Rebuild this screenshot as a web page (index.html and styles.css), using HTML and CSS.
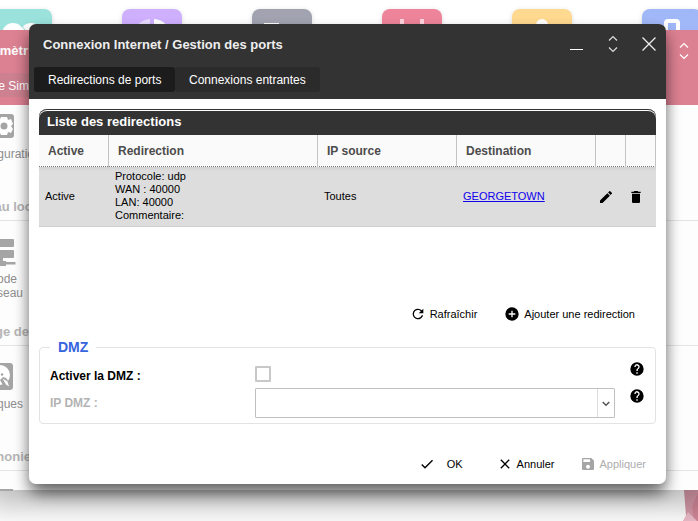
FILE: index.html
```html
<!DOCTYPE html>
<html lang="fr">
<head>
<meta charset="utf-8">
<title>Gestion des ports</title>
<link rel="stylesheet" href="styles.css">
</head>
<body>
<div class="desktop">
  <div class="apps">
    <div class="app teal"><svg width="60" height="60" viewBox="0 0 60 60"><circle cx="21" cy="25" r="11" fill="#fff"/><circle cx="39" cy="25" r="11" fill="#fff"/><path d="M30 17l5 7" stroke="#9be1dc"/></svg></div>
    <div class="app violet"><svg width="60" height="60" viewBox="0 0 60 60"><path d="M28 10a18 18 0 0 0-17 17h17z" fill="#e8dcff"/><path d="M32 10a18 18 0 0 1 17 17H32z" fill="#fff"/><circle cx="30" cy="28" r="13.500" fill="#cfb0ff"/></svg></div>
    <div class="app gray"><svg width="60" height="60" viewBox="0 0 60 60"><path d="M12 14h15v30H12z" fill="#fff"/></svg></div>
    <div class="app rose"><svg width="60" height="60" viewBox="0 0 60 60"><path d="M18 10h4v20h-4zM38 10h4v20h-4z" fill="#ffd3dd"/></svg></div>
    <div class="app amber"><svg width="60" height="60" viewBox="0 0 60 60"><circle cx="30" cy="16" r="6" fill="#fff"/></svg></div>
    <div class="app blue"><svg width="60" height="60" viewBox="0 0 60 60"><rect x="24" y="12" width="12" height="20" rx="2" fill="none" stroke="#fff" stroke-width="4"/></svg></div>
  </div>
  <svg class="wall" width="16" height="31" viewBox="0 0 16 31"><path d="M1 0h15v31H0l3-5z" fill="#d79aa9"/><path d="M16 0v31h-5l-2-14z" fill="#d18798"/><path d="M0 31l5-9 9 9z" fill="#edbcca"/></svg>

  <section class="window settings">
    <header class="settings-head">
      <b class="settings-title">amètr</b>
      <svg class="settings-max" width="10" height="18" viewBox="0 0 10 18" fill="none" stroke="#fff" stroke-width="1.200"><path d="M1 5.500l4-4 4 4M1 12.500l4 4 4-4"/></svg>
      <span class="settings-tab">e Sim</span>
    </header>
    <div class="group first">
      <svg width="26" height="24" viewBox="0 0 26 24"><rect width="26" height="24" rx="3" fill="#a5a5a5"/><path d="M13 3h6l1 3 3-1 2 5-2 2 2 3-2 4-3-1-1 3h-6l-2-4-3-5 3-5z" fill="#fff"/><circle cx="16" cy="12" r="3.500" fill="#a5a5a5"/></svg>
      <span class="item cut">guratio</span>
    </div>
    <h3 class="cut1">au loc</h3>
    <div class="group net">
      <svg width="30" height="28" viewBox="0 0 30 28" fill="#a5a5a5"><rect width="28" height="8" rx="1"/><rect y="11" width="28" height="8" rx="1"/><path d="M14 19h3v3h3v1h9.500v2.500H20V27h-8v-5h2z"/></svg>
      <span class="item">ode</span>
      <span class="item two">seau</span>
    </div>
    <h3>ge de</h3>
    <div class="group disk">
      <svg width="26" height="27" viewBox="0 0 26 27"><rect width="26" height="27" rx="3" fill="#a5a5a5"/><circle cx="13" cy="12" r="10" fill="#fff"/><circle cx="15" cy="11.500" r="1.200" fill="#a5a5a5"/><path d="M13 17l3-3 3 1 6 8-2 3-6-2z" fill="#a5a5a5"/><path d="M15.500 15.500l5 3 1.500 5-3-2z" fill="#fff"/></svg>
      <span class="item">ques</span>
    </div>
    <h3 class="cut2">honie</h3>
    <div class="sliver"></div>
  </section>

  <section class="window dialog">
    <header class="head">
      <div class="titlebar">
        <b>Connexion Internet / Gestion des ports</b>
        <div class="controls">
          <svg width="13" height="16" viewBox="0 0 13 16"><path d="M0 12.500h13" stroke="#fff"/></svg>
          <svg width="10" height="18" viewBox="0 0 10 18" fill="none" stroke="#ddd" stroke-width="1.200"><path d="M1 5.500l4-4 4 4M1 12.500l4 4 4-4"/></svg>
          <svg width="14" height="14" viewBox="0 0 14 14"><path d="M.5.5l13 13M13.500.5l-13 13" stroke="#eee" stroke-width="1.300"/></svg>
        </div>
      </div>
      <nav class="tabs"><span class="tab active">Redirections de ports</span><span class="tab">Connexions entrantes</span></nav>
    </header>

    <div class="panel">
      <div class="panel-title">Liste des redirections</div>
      <div class="row columns"><b>Active</b><b>Redirection</b><b>IP source</b><b>Destination</b><b></b><b></b></div>
      <div class="row entry">
        <span>Active</span>
        <span class="rule">Protocole: udp<br>WAN : 40000<br>LAN: 40000<br>Commentaire:</span>
        <span>Toutes</span>
        <span><a href="#">GEORGETOWN</a></span>
        <span class="act"><svg width="16" height="16" viewBox="0 0 24 24"><path d="M3 17.250V21h3.750L17.810 9.940l-3.750-3.750L3 17.250zM20.710 7.040a1 1 0 0 0 0-1.410l-2.340-2.340a1 1 0 0 0-1.410 0l-1.830 1.830 3.750 3.750 1.830-1.830z"/></svg></span>
        <span class="act"><svg width="16" height="16" viewBox="0 0 24 24"><path d="M6 19c0 1.100.9 2 2 2h8c1.100 0 2-.9 2-2V7H6v12zM19 4h-3.500l-1-1h-5l-1 1H5v2h14V4z"/></svg></span>
      </div>
    </div>

    <div class="actions">
      <span class="btn refresh"><svg width="16" height="16" viewBox="0 0 24 24"><path d="M17.650 6.350A7.960 7.960 0 0 0 12 4a8 8 0 1 0 7.730 10h-2.080A6 6 0 1 1 12 6c1.660 0 3.140.69 4.220 1.780L13 11h7V4l-2.350 2.350z"/></svg>Rafraîchir</span>
      <span class="btn"><svg width="16" height="16" viewBox="0 0 24 24"><path d="M12 2a10 10 0 1 0 0 20 10 10 0 0 0 0-20zm5 11h-4v4h-2v-4H7v-2h4V7h2v4h4v2z"/></svg>Ajouter une redirection</span>
    </div>

    <fieldset class="dmz">
      <legend>DMZ</legend>
      <div class="field">
        <label>Activer la DMZ :</label>
        <span class="check"></span>
        <svg class="help" width="16" height="16" viewBox="0 0 24 24"><path d="M12 2a10 10 0 1 0 0 20 10 10 0 0 0 0-20zm1 17h-2v-2h2v2zm2.070-7.750l-.9.920C13.450 12.900 13 13.500 13 15h-2v-.5c0-1.100.45-2.100 1.170-2.830l1.240-1.260A2 2 0 1 0 10 9H8a4 4 0 1 1 7.070 2.250z"/></svg>
      </div>
      <div class="field">
        <label class="off">IP DMZ :</label>
        <span class="combo"><span class="arrow"><svg width="8" height="6" viewBox="0 0 8 6" fill="none" stroke="#555" stroke-width="1.500"><path d="M.7 1L4 4.300 7.300 1"/></svg></span></span>
        <svg class="help" width="16" height="16" viewBox="0 0 24 24"><path d="M12 2a10 10 0 1 0 0 20 10 10 0 0 0 0-20zm1 17h-2v-2h2v2zm2.070-7.750l-.9.920C13.450 12.900 13 13.500 13 15h-2v-.5c0-1.100.45-2.100 1.170-2.830l1.240-1.260A2 2 0 1 0 10 9H8a4 4 0 1 1 7.070 2.250z"/></svg>
      </div>
    </fieldset>

    <footer class="foot">
      <span class="btn ok"><svg width="16" height="16" viewBox="0 0 24 24"><path d="M9 16.170L4.830 12l-1.420 1.410L9 19 21 7l-1.410-1.410z"/></svg>OK</span>
      <span class="btn cancel"><svg width="16" height="16" viewBox="0 0 24 24"><path d="M19 6.410L17.590 5 12 10.590 6.410 5 5 6.410 10.590 12 5 17.590 6.410 19 12 13.410 17.590 19 19 17.590 13.410 12z"/></svg>Annuler</span>
      <span class="btn off"><svg width="16" height="16" viewBox="0 0 24 24"><path d="M17 3H5a2 2 0 0 0-2 2v14a2 2 0 0 0 2 2h14a2 2 0 0 0 2-2V7l-4-4zm-5 16a3 3 0 1 1 0-6 3 3 0 0 1 0 6zm3-10H5V5h10v4z"/></svg>Appliquer</span>
    </footer>
  </section>
</div>
</body>
</html>
```
FILE: styles.css
```css
* { box-sizing: border-box; }
body { margin: 0; font-family: "Liberation Sans", Arial, sans-serif; font-size: 11px; color: #000; }
svg { display: block; flex: none; }
.desktop { position: relative; width: 698px; height: 521px; overflow: hidden; background: #fff; }
.apps { display: flex; gap: 70px; padding-top: 9px; margin-left: -8px; }
.app { flex: none; width: 60px; height: 60px; border-radius: 8px; box-shadow: 0 1px 5px #0002; }
.teal { background: #9be1dc; }
.violet { background: #cfb0ff; }
.gray { background: #a1a4b0; }
.rose { background: #ee8499; }
.amber { background: #ffd98f; }
.blue { background: #a1b8f8; }
.wall { position: absolute; left: 683px; top: 490px; }
.window { position: absolute; }

.settings { left: -20px; top: 30px; width: 738px; height: 460px; padding-left: 20px; background: #fdfdfd; box-shadow: 0 22px 28px -6px #0004; }
.settings-head { display: grid; grid-template-columns: 29px 1fr; grid-template-rows: 43px 32px; height: 75px; margin-left: -20px; padding-left: 20px; background: #dc8192; color: #fff; overflow: hidden; }
.settings-title { justify-self: end; padding: 13px 1px 0 0; font-size: 13px; line-height: 16px; }
.settings-max { margin: 12px 0 0 650px; }
.settings-tab { justify-self: end; width: 60px; height: 24px; line-height: 26px; font-size: 12px; text-align: right; background: #cd8190; }
.group { width: 29px; display: flex; flex-direction: column; align-items: flex-end; overflow: hidden; color: #8e8e8e; font-size: 12px; line-height: 14px; }
.group svg { margin-right: 15px; }
.item { margin-right: 6px; white-space: nowrap; }
.first { height: 86px; padding-top: 9px; }
.first .item { margin: 9px -5px 0 0; }
.net { height: 100px; padding-top: 18px; }
.net svg { margin-right: 13px; }
.net .item:nth-child(2) { margin: 5px 12px 0 0; }
.disk { height: 100px; padding-top: 17px; }
.disk svg { margin-right: 16px; }
.disk .item { margin-top: 7px; }
.settings h3 { display: flex; justify-content: flex-end; height: 25px; margin: 0 -20px; padding: 3px 709px 0 0; font-size: 13px; line-height: 16px; color: #b5b5b5; border-bottom: 1px solid #e4e4e4; white-space: nowrap; }
.settings .cut1 { height: 30px; padding: 8px 706px 0 0; }
.settings .cut2 { padding: 3px 707px 0 0; }
.sliver { width: 13px; height: 2px; margin-top: 18px; background: #a5a5a5; }

.dialog { left: 29px; top: 24px; width: 637px; height: 460px; border-radius: 7px; background: #fff; box-shadow: 0 12px 20px -5px #0006, 0 8px 14px #0006; }
.head { height: 75px; border-radius: 7px 7px 0 0; background: #333; color: #eee; }
.titlebar { display: flex; justify-content: space-between; height: 43px; padding: 0 10px 0 14px; font-size: 13px; line-height: 41px; }
.controls { display: flex; align-items: center; gap: 25px; height: 40px; }
.controls svg:first-child { margin: 1px 0 0; }
.controls svg:last-child { margin-left: -1px; }
.tabs { display: flex; padding-left: 5px; }
.tab { height: 25px; padding-left: 14px; border-radius: 3px; background: #2b2b2b; font-size: 12px; line-height: 26px; color: #fff; white-space: nowrap; }
.tab.active { width: 141px; background: #1c1c1c; }
.tab:last-child { width: 145px; }
.panel { margin: 10px 10px 0; }
.panel-title { height: 26px; padding-left: 8px; border-radius: 8px 8px 0 0; background: #333; box-shadow: inset 0 1px 0 #333, inset 0 2px 0 #fff; color: #fff; font-size: 13px; font-weight: bold; line-height: 26px; }
.row { display: grid; grid-template-columns: 70px 209px 139px 139px 30px 30px; }
.columns { height: 32px; background: #fafafa; border-bottom: 1px dotted #777; font-size: 12px; line-height: 32px; color: #4c4c4c; }
.columns b { padding-left: 9px; border-right: 1px solid #c4c4c4; }
.entry { height: 60px; align-items: center; background: linear-gradient(#d0d0d0, #ddd 4px); line-height: 13px; border-bottom: 1px dotted #ccc; }
.entry > span { padding-left: 6px; }
.entry > .rule { padding-bottom: 2px; }
.entry > .act { padding-left: 2px; }
.entry a { color: #1000ee; }
.actions { display: flex; justify-content: flex-end; height: 112px; padding: 79px 31px 0 0; }
.btn { display: flex; align-items: center; gap: 4px; height: 16px; }
.refresh { margin-right: 27px; }
.dmz { height: 85px; margin: 0 10px; padding: 6px 10px 0 10px; border: 1px solid #e3e3e3; border-radius: 4px; }
.dmz legend { padding: 0 8px; color: #3564df; font-size: 14px; font-weight: bold; line-height: 16px; }
.field { display: grid; grid-template-columns: 205px 1fr 16px; height: 27px; font-size: 12px; font-weight: bold; }
.field label { padding-top: 8px; line-height: 14px; }
.field .off { color: #b3b3b3; }
.check { width: 16px; height: 16px; margin-top: 5px; border: 2px solid #c8c8c8; border-radius: 1px; }
.combo { display: flex; justify-content: flex-end; width: 360px; height: 30px; border: 1px solid #c0c0c0; border-radius: 1px; }
.arrow { display: grid; place-items: center; width: 17px; border-left: 1px solid #ddd; padding-top: 2px; }
.foot { display: flex; justify-content: flex-end; padding: 32px 20px 0 0; }
.ok { gap: 12px; margin-right: 34px; }
.cancel { margin-right: 25px; }
.foot .off { color: #adadad; fill: #a5a5a5; }
```
